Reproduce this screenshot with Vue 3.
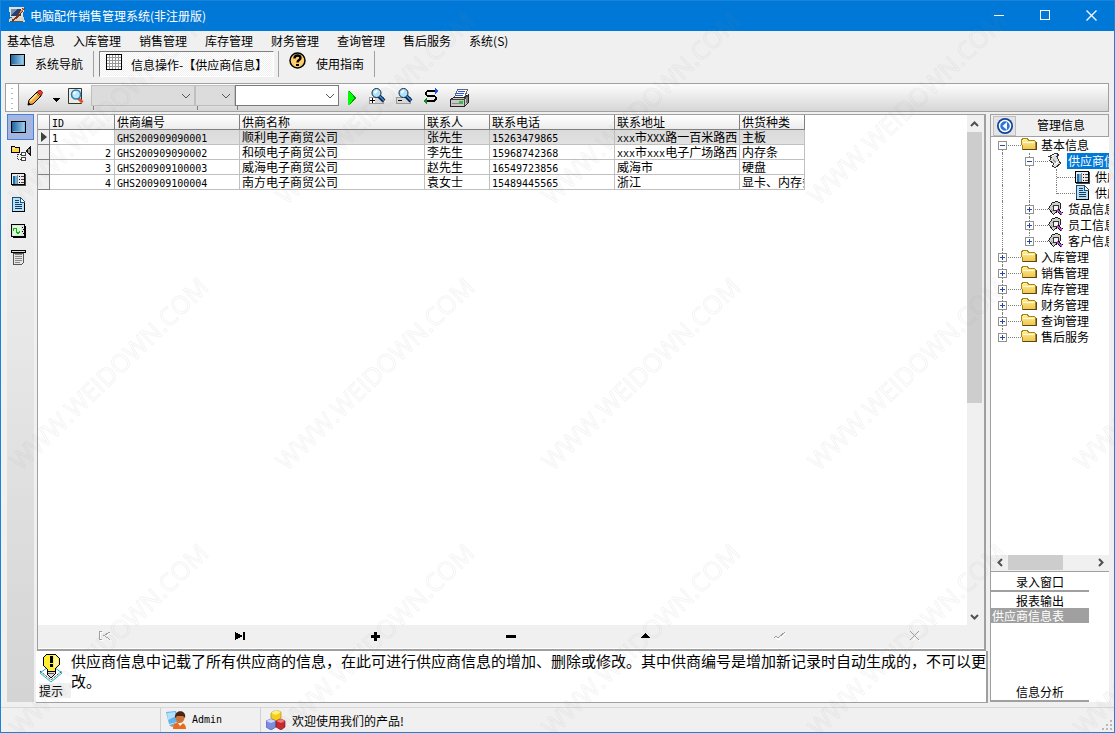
<script setup>
import { ref } from 'vue'

const menus = ['基本信息', '入库管理', '销售管理', '库存管理', '财务管理', '查询管理', '售后服务', '系统(S)']

const columns = ['ID', '供商编号', '供商名称', '联系人', '联系电话', '联系地址', '供货种类']
const rows = [
  ['1', 'GHS200909090001', '顺利电子商贸公司', '张先生', '15263479865', 'xxx市XXX路一百米路西', '主板'],
  ['2', 'GHS200909090002', '和硕电子商贸公司', '李先生', '15968742368', 'xxx市xxx电子广场路西', '内存条'],
  ['3', 'GHS200909100003', '威海电子商贸公司', '赵先生', '16549723856', '威海市', '硬盘'],
  ['4', 'GHS200909100004', '南方电子商贸公司', '袁女士', '15489445565', '浙江', '显卡、内存条'],
]
const selected = ref(0)

// Splits a string into Latin and Chinese runs so each gets its own type size.
const runs = (text) =>
  (text.match(/[\x20-\x7e]+|[^\x20-\x7e]+/g) || []).map((t) => ({ t, latin: /^[\x20-\x7e]/.test(t) }))

const tree = [
  { level: 0, text: '基本信息', icon: 'folder', box: '-', edge: 'first' },
  { level: 1, text: '供应商信息', icon: 'scroll', box: '-', active: true },
  { level: 2, text: '供应商信息', icon: 'form' },
  { level: 2, text: '供应商信息表', icon: 'doc', edge: 'last' },
  { level: 1, text: '货品信息', icon: 'tag', box: '+' },
  { level: 1, text: '员工信息', icon: 'tag', box: '+' },
  { level: 1, text: '客户信息', icon: 'tag', box: '+', edge: 'last' },
  { level: 0, text: '入库管理', icon: 'folder', box: '+' },
  { level: 0, text: '销售管理', icon: 'folder', box: '+' },
  { level: 0, text: '库存管理', icon: 'folder', box: '+' },
  { level: 0, text: '财务管理', icon: 'folder', box: '+' },
  { level: 0, text: '查询管理', icon: 'folder', box: '+' },
  { level: 0, text: '售后服务', icon: 'folder', box: '+', edge: 'last' },
]

const side = [
  { icon: 'screen', label: '窗口' },
  { icon: 'struct', label: '结构' },
  { icon: 'form', label: '录入' },
  { icon: 'doc', label: '报表' },
  { icon: 'chart', label: '分析' },
  { icon: 'receipt', label: '打印' },
]

const nav = [
  { id: 'first', label: '首记录', off: true },
  { id: 'last', label: '末记录' },
  { id: 'add', label: '增加' },
  { id: 'del', label: '删除' },
  { id: 'edit', label: '修改' },
  { id: 'ok', label: '确认', off: true },
  { id: 'cancel', label: '取消', off: true },
]
</script>

<template>
  <div class="window">
    <svg class="defs" aria-hidden="true">
      <defs>
        <linearGradient id="gBlue"><stop offset="0" stop-color="#1c5f9c" /><stop offset="1" stop-color="#a6d8f2" /></linearGradient>
        <linearGradient id="gFold" x2="0" y2="1"><stop offset="0" stop-color="#fff3a8" /><stop offset="1" stop-color="#efc445" /></linearGradient>
        <symbol id="screen" viewBox="0 0 16 16"><path d="M.5 2.5h14v11H.5z" fill="url(#gBlue)" stroke="#000" /><path d="M1.500 12.500h12v-9" fill="none" stroke="#7fb6dc" /></symbol>
        <symbol id="struct" viewBox="0 0 22 16">
          <path d="M.5 1.500h3l1 1h4v5h-8z" fill="#ffd54a" stroke="#000" />
          <path d="M1 3h3" stroke="#fff3a8" />
          <path d="M10.500 7.500h4v3h-4zM10.500 12.500h4v3h-4z" fill="#fff" stroke="#444" />
          <path d="M6.500 9v6M7 9.500h3M7 14.500h3" stroke="#333" stroke-dasharray="1 1" />
          <path d="M20 0v12l-5-6z" fill="#111" /><path d="M17 4h2v4h-2z" fill="#999" />
        </symbol>
        <symbol id="form" viewBox="0 0 16 16">
          <path d="M.5 2.500h13v11H.5z" fill="#ececec" stroke="#000" /><path d="M14.500 3v11.500H1" fill="none" stroke="#444" />
          <path d="M2 5h4v8H2z" fill="#6bb5e6" /><path d="M2 5h2v8H2z" fill="#1c6fac" /><path d="M6.500 4v9" stroke="#888" />
          <path d="M8 5.500h1M8 8.500h1M8 11.500h1" stroke="#000" /><path d="M10 5.500h3M10 8.500h3M10 11.500h3" stroke="#444" />
        </symbol>
        <symbol id="doc" viewBox="0 0 16 16">
          <path d="M1.500 .5h8l4 4v10h-12z" fill="#b7e2fb" stroke="#1b4c76" /><path d="M13.500 5v9.500H1" fill="none" stroke="#000" />
          <path d="M9.500 1v4h4" fill="#fff" stroke="#1b4c76" /><path d="M4 3.500h4M4 5.500h4M4 7.500h7M4 9.500h7M4 11.500h7" stroke="#143a5c" />
        </symbol>
        <symbol id="chart" viewBox="0 0 16 16">
          <path d="M.5 1.500h13v12H.5z" fill="#e2e2e2" stroke="#000" /><path d="M14.500 3v11.500H2" fill="none" stroke="#000" />
          <path d="M2 3h8v9H2z" fill="#d7ffd7" /><path d="M2.500 8V6l1-1h1l1 1v3l1 1h1l1-1V8" fill="none" stroke="#12b412" />
          <path d="M11.500 4v1M12.500 6v1M11.500 8v1M12.500 10v1" stroke="#000" />
        </symbol>
        <symbol id="receipt" viewBox="0 0 16 16">
          <path d="M.5 1.500h14v2H.5z" fill="#ddd" stroke="#000" /><path d="M2.500 4v11.500h8l2-2V4z" fill="#e6e6e6" stroke="#555" />
          <path d="M4 5.500h7M4 7.500h7M4 9.500h7M4 11.500h7M4 13.500h5" stroke="#888" />
        </symbol>
        <symbol id="folder" viewBox="0 0 16 16">
          <path d="M.5 3.500l1-2h5l1 2h6l1 1v8h-13z" fill="url(#gFold)" stroke="#a9861c" /><path d="M2 12.500h13.500V5" fill="none" stroke="#5c4a18" /><path d="M2 5.500h11" stroke="#fffbd8" />
        </symbol>
        <symbol id="scroll" viewBox="0 0 16 16">
          <path d="M1.500 3.500l6-3h2l1 2-2 1 3 5 1 2-5 4-3-1 1-3-4-3 2-3z" fill="#dcdcdc" stroke="#333" /><path d="M4 3l4-2M6 12l4-3" stroke="#fff" /><path d="M5 6l3 4" stroke="#999" />
        </symbol>
        <symbol id="tag" viewBox="0 0 16 16">
          <path d="M.5 7.500l4-6 5-1 3 2v5l-7 6z" fill="#cfcfcf" stroke="#222" /><path d="M4 5l2 2M3 8l2 2" stroke="#999" /><circle cx="8" cy="7" r="3" fill="#f4f4f4" stroke="#333" />
          <path d="M9 9l5 4" stroke="#000" stroke-width="3" /><path d="M9 9l5 4" stroke="#bb4ad0" stroke-width="2" />
        </symbol>
        <symbol id="lens" viewBox="0 0 16 16">
          <path d="M8 8l5 5" stroke="#05204a" stroke-width="4" /><path d="M8 7.500l5 5" stroke="#3e8fe0" stroke-width="1.500" />
          <circle cx="5.500" cy="5" r="4.500" fill="#aee4fb" stroke="#0a2540" /><path d="M3.500 5l2.500-2.500" stroke="#fff" stroke-width="2" />
        </symbol>
        <pattern id="mark" x="-25" y="-26" width="266" height="266" patternUnits="userSpaceOnUse">
          <text class="mark-text" transform="translate(133 133) rotate(-44)" text-anchor="middle" y="9">WWW.WEIDOWN.COM</text>
        </pattern>
      </defs>
    </svg>

    <header class="titlebar">
      <svg class="app-icon" viewBox="0 0 18 18">
        <path d="M1 1h15l-1 10H2z" fill="#e4e2df" /><path d="M3 3h10v7H3z" fill="#28406e" /><path d="M3 3h6l-6 6z" fill="#7890b4" />
        <path d="M1 13l4-2h11l1 5H1z" fill="#d8d4cc" /><path d="M2 15.500h13" stroke="#555" />
        <path d="M16 2l-7 9-5 4" fill="none" stroke="#7d3514" stroke-width="2" /><path d="M16 2l-5 6" stroke="#e88a50" />
      </svg>
      <h1>电脑配件销售管理系统(非注册版)</h1>
      <div class="win-buttons">
        <button aria-label="最小化"><svg viewBox="0 0 11 11"><path d="M0 5.500h10" /></svg></button>
        <button aria-label="最大化"><svg viewBox="0 0 11 11"><path d="M.5 .5h9v9h-9z" /></svg></button>
        <button aria-label="关闭"><svg class="smooth" viewBox="0 0 11 11"><path d="M.5 .5l10 10M10.500 .5l-10 10" stroke-width="1.300" /></svg></button>
      </div>
    </header>

    <nav class="menubar">
      <button v-for="m in menus" :key="m">{{ m }}</button>
    </nav>

    <div class="tabs">
      <button class="tab first">
        <svg class="ic16" viewBox="0 0 16 16"><use href="#screen" /></svg><span>系统导航</span>
      </button>
      <i class="sep"></i>
      <button class="tab pressed">
        <svg class="ic17" viewBox="0 0 17 17">
          <path d="M.5 .5h15v15H.5z" fill="#fff" stroke="#000" />
          <path d="M3.500 1v14M6.500 1v14M9.500 1v14M12.500 1v14M1 3.500h14M1 6.500h14M1 9.500h14M1 12.500h14" stroke="#999" />
        </svg><span>信息操作-【供应商信息】</span>
      </button>
      <i class="sep"></i>
      <button class="tab help">
        <svg class="ic17 smooth" viewBox="0 0 17 17">
          <circle cx="8.500" cy="8.500" r="7.500" fill="#ffce6b" stroke="#000" stroke-width="1.500" />
          <path d="M5.500 6.500c0-4 6-4 6-.5 0 2.200-3 2-3 4.500" fill="none" stroke="#000" stroke-width="2.400" /><path d="M7 12h3v2H7z" fill="#000" />
        </svg><span>使用指南</span>
      </button>
      <i class="sep"></i>
    </div>

    <div class="toolbar">
      <i class="grip"></i>
      <button class="tool pencil" aria-label="编辑">
        <svg class="ic16 smooth" viewBox="0 0 16 16">
          <path d="M1 15l1-5L10 2l4 4-8 8z" fill="#f5a93c" stroke="#000" /><path d="M3 11l7-7" stroke="#ffe7a0" stroke-width="1.500" />
          <path d="M10 2l2-1.500h2l1.500 2L14 6z" fill="#e0412c" stroke="#8c1a10" /><path d="M9 3l4 4" stroke="#3c8a3c" /><path d="M1 15l.5-3L4 14.500z" fill="#000" />
        </svg>
      </button>
      <button class="tool drop" aria-label="更多"><svg viewBox="0 0 8 4"><path d="M0 0h7L3.500 4z" /></svg></button>
      <button class="tool find" aria-label="查找">
        <svg class="ic16 smooth" viewBox="0 0 16 16">
          <path d="M.5 .5h13v15H.5z" fill="#ececdf" stroke="#333" /><path d="M10 10l4.500 4.500" stroke="#e0502c" stroke-width="3" />
          <circle cx="8" cy="6.500" r="4.500" fill="#bce9fb" stroke="#2880b8" stroke-width="1.500" /><path d="M5.500 6l2-2" stroke="#fff" stroke-width="2" />
        </svg>
      </button>
      <div class="combo wide"><select aria-label="字段" disabled></select><svg viewBox="0 0 10 6"><path d="M1 1l4 4 4-4" /></svg></div>
      <div class="combo narrow"><select aria-label="条件" disabled></select><svg viewBox="0 0 10 6"><path d="M1 1l4 4 4-4" /></svg></div>
      <div class="combo wide"><select aria-label="值"></select><svg viewBox="0 0 10 6"><path d="M1 1l4 4 4-4" /></svg></div>
      <button class="tool play" aria-label="执行"><svg viewBox="0 0 9 14"><path d="M0 0h1l7 7-7 7H0z" fill="#0f0" /><path d="M1.500 .5l6 6.500-6 6.500" fill="none" stroke="#0a9a0a" /></svg></button>
      <button class="tool z1" aria-label="放大">
        <svg class="ic17" viewBox="0 0 17 17"><path d="M.5 9.500h14v6H.5z" fill="#d8d8d8" stroke="#999" /><path d="M1 10h5v5H1z" fill="#fff" /><path d="M1 12.500h5M3.500 10v5" stroke="#000" /><use class="curve" href="#lens" x="2" width="16" height="16" /></svg>
      </button>
      <button class="tool z2" aria-label="缩小">
        <svg class="ic17" viewBox="0 0 17 17"><path d="M.5 9.500h14v6H.5z" fill="#d8d8d8" stroke="#999" /><path d="M2 12.500h4" stroke="#000" /><use class="curve" href="#lens" x="2" width="16" height="16" /></svg>
      </button>
      <button class="tool z3" aria-label="刷新">
        <svg class="ic17" viewBox="0 0 17 17">
          <path d="M13 3H5L3 4.500v2L5 8h6l2 1.500v1.500L11 13H3" fill="none" stroke="#000" stroke-width="1.500" />
          <path d="M12 0l4 3-4 3z" fill="#2050e8" /><path d="M4 10v6l-4-3z" fill="#158a25" />
        </svg>
      </button>
      <button class="tool z4" aria-label="打印">
        <svg class="ic20" viewBox="0 0 20 20">
          <path d="M7.500 1.500h10l-3 8h-10z" fill="#fff" stroke="#666" /><path d="M8 3.500h7M7 5.500h7M6 7.500h7" stroke="#2a54e0" />
          <path d="M.5 11.500l3-2h11l4-3v8l-4 4H.5z" fill="#c9c9c9" stroke="#222" /><path d="M.5 11.500h14v6M14 11.500l4-4" fill="none" stroke="#444" /><path d="M16.500 9v6" stroke="#777" stroke-width="2" />
          <path d="M2 15.500h11" stroke="#888" /><path d="M9 13h4v2H9z" fill="#12d812" />
        </svg>
      </button>
    </div>

    <main class="body">
      <aside class="sidebar">
        <button v-for="(s, i) in side" :key="s.icon" :class="{ on: i === 0 }" :aria-label="s.label">
          <svg :class="s.icon === 'struct' ? 'ic22' : 'ic16'"><use :href="'#' + s.icon" /></svg>
        </button>
      </aside>

      <section class="center">
        <div class="grid-panel">
          <div class="grid-row">
            <div class="grid-area">
              <table>
                <colgroup><col class="c12" /><col class="c65" /><col class="c125" /><col class="c185" /><col class="c65" /><col class="c125" /><col class="c125" /><col class="c65" /></colgroup>
                <thead>
                  <tr><th></th><th v-for="c in columns" :key="c"><span v-for="r in runs(c)" :key="r.t" :class="{ latin: r.latin }">{{ r.t }}</span></th></tr>
                </thead>
                <tbody>
                  <tr v-for="(row, i) in rows" :key="i" :class="{ cur: i === selected }" @click="selected = i">
                    <td class="mark-cell"><svg v-if="i === selected" viewBox="0 0 6 10"><path d="M0 0l6 5-6 5z" /></svg></td>
                    <td v-for="(v, j) in row" :key="j" :class="{ id: j === 0 }"><span v-for="(r, k) in runs(v)" :key="k" :class="{ latin: r.latin }">{{ r.t }}</span></td>
                  </tr>
                </tbody>
              </table>
            </div>
            <div class="vscroll">
              <button aria-label="向上"><svg viewBox="0 0 9 6"><path d="M1 5l3.500-3.500L8 5" /></svg></button>
              <div class="track"><div class="thumb"></div></div>
              <button aria-label="向下"><svg viewBox="0 0 9 6"><path d="M1 1l3.500 3.500L8 1" /></svg></button>
            </div>
          </div>
          <div class="navigator">
            <button v-for="n in nav" :key="n.id" :aria-label="n.label" :disabled="n.off">
              <svg viewBox="0 0 14 12">
                <template v-if="n.id === 'first'">
                  <path class="lo" d="M4.500 2.500h-2v8h2M13 3L7 6.500l6 4" /><path class="dim" d="M3.500 1.500h-2v8h2M12 2L6 5.500l6 4" />
                </template>
                <template v-else-if="n.id === 'last'"><path d="M2 2l8 4-8 4z" /><path d="M10 2h2v8h-2z" /></template>
                <path v-else-if="n.id === 'add'" d="M6 2h3v3h3v3H9v3H6V8H3V5h3z" />
                <path v-else-if="n.id === 'del'" d="M3 5h10v3H3z" />
                <path v-else-if="n.id === 'edit'" d="M2 8h10L7 3z" />
                <template v-else-if="n.id === 'ok'">
                  <path class="lo" d="M3 8l3 2 7-7" /><path class="dim" d="M1 8l2-2 2 2 7-6" />
                </template>
                <template v-else><path class="lo" d="M3 2l9 9M12 3l-9 9" /><path class="dim" d="M2 1l9 9M11 1l-9 9" /></template>
              </svg>
            </button>
          </div>
        </div>

        <div class="hint">
          <div class="hint-label">
            <svg class="bulb" viewBox="0 0 24 30">
              <path class="curve" d="M12 12l11 8-11 9-11-9z" fill="#fff" stroke="#17bdc6" /><path class="curve" d="M1 18l11 9 11-9" fill="none" stroke="#000" stroke-dasharray="1 1" />
              <path d="M8 1h8l4 4v7l-4 4v2H8v-2l-4-4V5z" fill="#ffee2e" stroke="#000" />
              <path d="M15 2l4 4v5l-4 4z" fill="#fff7a0" />
              <path d="M11 3h2v6h-2zM11 11h2v2h-2z" fill="#000" stroke="#000" />
              <path d="M8 18h8v3l-3 3h-2l-3-3z" fill="#ddd" stroke="#000" /><path d="M9 20.500h6" stroke="#555" />
            </svg>
            <span>提示</span>
          </div>
          <p>供应商信息中记载了所有供应商的信息，在此可进行供应商信息的增加、删除或修改。其中供商编号是增加新记录时自动生成的，不可以更改。</p>
        </div>
      </section>

      <aside class="right">
        <div class="right-head">
          <button aria-label="返回">
            <svg class="smooth" viewBox="0 0 18 18"><circle cx="9" cy="9" r="8" fill="#12439c" /><circle cx="9" cy="9" r="5.500" fill="#2a76d8" stroke="#fff" stroke-width="1.500" /><path d="M11 5v8L6.500 9z" fill="#fff" /></svg>
          </button>
          <h2>管理信息</h2>
        </div>
        <ul class="tree">
          <li v-for="(n, i) in tree" :key="i">
            <i v-for="l in n.level" :key="l" class="guide"></i>
            <span class="branch" :class="n.edge"><button v-if="n.box" :aria-label="n.box === '+' ? '展开' : '折叠'"><svg viewBox="0 0 9 9"><path d="M2 4.500h5" /><path v-if="n.box === '+'" d="M4.500 2v5" /></svg></button></span>
            <svg class="ic16"><use :href="'#' + n.icon" /></svg>
            <a href="#" :class="{ active: n.active }">{{ n.text }}</a>
          </li>
        </ul>
        <div class="hscroll">
          <button aria-label="向左"><svg viewBox="0 0 6 9"><path d="M5 1L1.500 4.500 5 8" /></svg></button>
          <div class="htrack"><div class="hthumb"></div></div>
          <button aria-label="向右"><svg viewBox="0 0 6 9"><path d="M1 1l3.500 3.500L1 8" /></svg></button>
        </div>
        <div class="outbar">
          <button class="group">录入窗口</button>
          <button class="group plain">报表输出</button>
          <button class="item">供应商信息表</button>
          <button class="group end">信息分析</button>
        </div>
      </aside>
    </main>

    <footer class="status">
      <div class="cell blank"></div>
      <div class="cell user">
        <svg class="ic20 smooth" viewBox="0 0 20 20">
          <path d="M0 2l10-1 2 11-9 2z" fill="#5fb4ee" /><path d="M1 3l8-1 1 4-8 4z" fill="#b4e0fb" /><path d="M3 15l6-2 1 3-4 1z" fill="#8ea2b4" />
          <path d="M7 19c0-5 3-7 6-7s7 2 7 7z" fill="#ea6a1f" /><circle cx="14" cy="8" r="4.500" fill="#c9743c" /><path d="M9 8c-1-9 12-9 10 0l-2-2h-6z" fill="#4a2513" /><path d="M12 13l2 3 3-3z" fill="#fff" />
        </svg>
        <span class="latin">Admin</span>
      </div>
      <div class="cell">
        <svg class="ic20 smooth" viewBox="0 0 20 20">
          <path d="M5 3l5-3 5 2v6l-5 3-5-3z" fill="#f6cf16" stroke="#a98400" stroke-width=".6" /><path d="M5 3l5 2 5-3-5-2z" fill="#fff08a" />
          <path d="M0 11l5-2 5 2v6l-5 3-5-3z" fill="#7d8ee0" stroke="#3a459a" stroke-width=".6" /><path d="M0 11l5 2 5-2-5-2z" fill="#cdd5fa" />
          <path d="M10 11l5-2 4 2v6l-4 3-5-3z" fill="#c8262c" stroke="#74090e" stroke-width=".6" /><path d="M10 11l5 2 4-2-4-2z" fill="#ef7b7b" />
        </svg>
        <span>欢迎使用我们的产品!</span>
      </div>
      <svg class="size-grip" viewBox="0 0 12 12"><path d="M8 0h2v2H8zM4 4h2v2H4zM8 4h2v2H8zM0 8h2v2H0zM4 8h2v2H4zM8 8h2v2H8z" /></svg>
    </footer>

    <svg class="watermark" aria-hidden="true"><rect width="100%" height="100%" fill="url(#mark)" /></svg>
  </div>
</template>

<style>
body { margin: 0; }
</style>

<style scoped>
* { box-sizing: border-box; }
.window {
  position: relative; display: flex; flex-direction: column; height: 100vh; overflow: hidden;
  border: 1px solid #1a82d8; background: #f0f0f0; color: #000;
  font: 12px/15px "Noto Sans CJK SC", sans-serif;
}
svg { display: block; flex: none; shape-rendering: crispEdges; }
svg.smooth, .curve { shape-rendering: auto; }
.defs { position: absolute; width: 0; height: 0; }
button { display: flex; align-items: center; margin: 0; padding: 0; border: 0; background: none; color: inherit; font: inherit; white-space: nowrap; }
h1, h2, p, ul { margin: 0; padding: 0; font: inherit; }
.latin { font: 10px/12px "DejaVu Sans Mono", monospace; }
.ic16 { width: 16px; height: 16px; }
.ic17 { width: 17px; height: 17px; }
.ic20 { width: 20px; height: 20px; }
.ic22 { width: 22px; height: 16px; }

.titlebar { display: flex; align-items: center; flex: none; height: 30px; padding: 0 0 2px 7px; background: #0078d7; color: #fff; }
.app-icon { width: 18px; height: 18px; margin-right: 4px; }
.titlebar h1 { flex: 1; }
.win-buttons { display: flex; }
.win-buttons button { width: 46px; height: 28px; justify-content: center; }
.win-buttons svg { width: 11px; height: 11px; fill: none; stroke: #fff; }

.menubar { display: flex; flex: none; gap: 18px; height: 20px; padding: 0 0 2px 6px; align-items: center; }

.tabs { display: flex; flex: none; height: 32px; }
.tab { align-items: flex-start; height: 26px; }
.tab span { margin-top: 5px; line-height: 16px; }
.tab.first { padding-left: 9px; }
.tab.first svg { margin-right: 9px; margin-top: 1px; }
.tab.pressed {
  min-width: 175px; margin-left: 5px; padding: 2px 2px 0 6px; border: 1px solid; border-color: #808080 #fff #fff #808080;
  background: repeating-conic-gradient(#fff 0 25%, #f0f0f0 0 50%) 0 0 / 2px 2px;
}
.tab.pressed span { margin: 3px 0 0 8px; }
.tab.help { margin-left: 10px; }
.tab.help svg { margin: 1px 10px 0 0; }
.sep { width: 1px; height: 26px; margin-left: 10px; background: #a0a0a0; }
.tab.pressed + .sep { margin-left: 4px; }

.toolbar {
  display: flex; flex: none; align-items: flex-start; height: 29px; margin: 0 5px 0 4px; border: 1px solid #a0a0a0;
  background: linear-gradient(#fdfdfd, #d6d6d6);
}
.grip { align-self: stretch; width: 13px; border-right: 1px solid #a0a0a0; background: radial-gradient(circle, #bbb 1px, transparent 1px) 50% 2px / 12px 5px, #fff; }
.tool svg { overflow: visible; }
.pencil { margin: 6px 0 0 8px; }
.drop { margin: 14px 0 0 10px; }
.drop svg { width: 8px; height: 4px; }
.find { margin: 4px 0 0 7px; }
.combo { position: relative; height: 21px; margin-top: 1px; }
.combo:first-of-type { margin-left: 7px; }
.combo select { display: block; width: 100%; height: 100%; border: 1px solid #7a7a7a; border-radius: 0; background: #fff; appearance: none; }
.combo select:disabled { border-color: #bfbfbf; background: #dcdcdc; opacity: 1; }
.combo svg { position: absolute; right: 4px; top: 8px; width: 10px; height: 6px; fill: none; stroke: #555; pointer-events: none; shape-rendering: auto; }
.combo::after { content: ""; position: absolute; left: 2px; top: 21px; width: 1px; height: 4px; background: #808080; }
.wide { width: 104px; }
.narrow { width: 40px; }
.play { margin: 7px 0 0 9px; }
.play svg { width: 9px; height: 14px; }
.z1 { margin: 4px 0 0 12px; }
.z2, .z3, .z4 { margin: 4px 0 0 10px; }

.body { display: flex; flex: 1; min-height: 0; }
.sidebar { flex: none; width: 27px; margin: 2px 2px 1px 6px; background: linear-gradient(#f3f3f3, #d4d4d4); }
.sidebar button { width: 27px; height: 26px; padding-left: 4px; }
.sidebar .on { border: 1px solid #4a7fd8; background: #a3b6e0; padding-left: 3px; }

.center { display: flex; flex: 1; flex-direction: column; min-width: 0; margin-top: 2px; }
.grid-panel { display: flex; flex: 1; flex-direction: column; min-height: 0; margin: 0 3px 0 1px; border: 1px solid #a0a0a0; border-width: 1px 2px 2px 1px; }
.grid-row { display: flex; flex: 1; min-height: 0; }
.grid-area { flex: 1; min-width: 0; overflow: hidden; background: #fff; }
table { width: 767px; border-collapse: separate; border-spacing: 0; table-layout: fixed; }
.c12 { width: 12px; } .c65 { width: 65px; } .c125 { width: 125px; } .c185 { width: 185px; }
th, td { height: 15px; padding: 0 0 0 2px; overflow-x: clip; overflow-y: visible; border-right: 1px solid #c0c0c0; border-bottom: 1px solid #c0c0c0; font-weight: normal; line-height: 14px; text-align: left; white-space: nowrap; vertical-align: top; }
th { border-color: #808080; background: linear-gradient(#fff, #ececec); }
th .latin, td .latin { line-height: 8px; }
td.id { padding-right: 3px; text-align: right; }
.cur td { background: linear-gradient(#dadada, #e2e2e2); }
.cur td.id { background: #fff; text-align: left; }
td.mark-cell, .cur td.mark-cell { padding: 2px 0 0 3px; border-color: #808080; background: #f0f0f0; }
.mark-cell svg { width: 6px; height: 10px; fill: #404040; shape-rendering: auto; }
.vscroll { display: flex; flex-direction: column; flex: none; width: 17px; padding-right: 2px; background: #f0f0f0; }
.vscroll button { height: 17px; justify-content: center; }
.vscroll svg, .hscroll svg { fill: none; stroke: #505050; stroke-width: 2; shape-rendering: auto; }
.vscroll svg { width: 9px; height: 6px; }
.track { flex: 1; }
.thumb { height: 57%; background: #cdcdcd; }
.navigator { display: flex; flex: none; height: 24px; padding: 0 2px 1px 0; border-bottom: 1px solid #fff; }
.navigator button { flex: 1; justify-content: center; }
.navigator svg { width: 14px; height: 12px; }
.lo { fill: none; stroke: #fff; }
.dim { fill: none; stroke: #a0a0a0; }

.hint { display: flex; flex: none; height: 52px; margin-right: 1px; border-right: 2px solid #a0a0a0; border-bottom: 1px solid #a0a0a0; background: #fff; }
.hint-label { display: flex; flex: none; flex-direction: column; align-items: flex-start; width: 35px; padding: 2px 0 0 3px; }
.bulb { width: 24px; height: 30px; }
.hint-label span { width: 32px; line-height: 15px; background: #f0f0f0; }
.hint p { flex: 1; min-width: 0; font-size: 15px; line-height: 20px; }

.right { display: flex; flex: none; flex-direction: column; width: 119px; margin: 2px 5px 1px 1px; border-left: 1px solid #a0a0a0; background: #fff; }
.right-head { display: flex; flex: none; height: 23px; border: solid #a0a0a0; border-width: 1px 1px 1px 0; background: #f0f0f0; }
.right-head button { width: 23px; margin: 1px 0 0 2px; justify-content: center; border: 1px solid #c0c0c0; background: #e4e4e4; }
.right-head svg { width: 18px; height: 18px; }
.right-head h2 { margin-left: 21px; line-height: 19px; }
.tree { flex: 1; overflow: hidden; list-style: none; }
.tree li { display: flex; align-items: center; height: 16px; padding-left: 7px; }
.guide { position: relative; flex: none; width: 27px; height: 16px; }
.branch { position: relative; flex: none; width: 23px; height: 16px; }
.guide::before, .branch::before { content: ""; position: absolute; left: 4px; top: 0; bottom: 0; border-left: 1px dotted #808080; }
.branch::after { content: ""; position: absolute; left: 5px; right: 0; top: 8px; border-top: 1px dotted #808080; }
.branch.first::before { top: 8px; }
.branch.last::before { bottom: 7px; }
.branch button { position: absolute; z-index: 1; left: 0; top: 4px; width: 9px; height: 9px; border: 1px solid #919191; background: #fff; }
.branch svg { width: 9px; height: 9px; margin: -1px; stroke: #2a4a9c; }
.tree a { flex: none; margin-left: 3px; padding: 0 1px; color: #000; line-height: 16px; text-decoration: none; white-space: nowrap; }
.tree a.active { background: #0078d7; color: #fff; }
.hscroll { display: flex; flex: none; height: 16px; background: #f0f0f0; }
.hscroll button { width: 17px; height: 15px; justify-content: center; }
.hscroll svg { width: 6px; height: 9px; }
.htrack { flex: 1; }
.hthumb { width: 65%; height: 15px; background: #cdcdcd; }
.outbar { display: flex; flex: none; flex-direction: column; height: 131px; padding-right: 20px; border-top: 1px solid #a0a0a0; }
.group { flex: none; height: 20px; justify-content: center; border-bottom: 2px solid #a0a0a0; }
.group.plain { height: 16px; border: 0; }
.item { flex: none; height: 15px; padding-left: 1px; background: #a0a0a0; color: #fff; }
.group.end { margin-top: auto; }

.status { position: relative; display: flex; flex: none; align-items: stretch; height: 25px; margin-top: 4px; border-top: 1px solid #d7d7d7; }
.cell { display: flex; align-items: center; gap: 6px; padding-left: 5px; }
.cell + .cell { border-left: 1px solid #d0d0d0; }
.blank { width: 159px; }
.user { width: 100px; }
.size-grip { position: absolute; right: 0; bottom: 0; width: 12px; height: 12px; fill: #b8b8b8; }

.watermark { position: absolute; inset: 0; width: 100%; height: 100%; pointer-events: none; }
.mark-text { fill: none; stroke: #808080; stroke-opacity: .09; stroke-width: 1; font: 25px "Open Sans", sans-serif; }
</style>
